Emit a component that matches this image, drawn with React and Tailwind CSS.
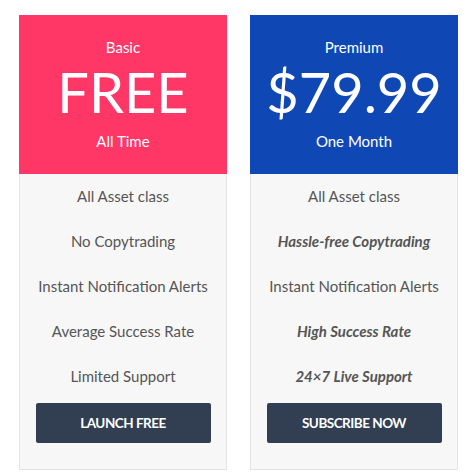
const plans = [
  {
    name: "Basic",
    price: "FREE",
    period: "All Time",
    head: "bg-[#ff3767]",
    cta: "LAUNCH FREE",
    features: [
      { text: "All Asset class" },
      { text: "No Copytrading" },
      { text: "Instant Notification Alerts" },
      { text: "Average Success Rate" },
      { text: "Limited Support" },
    ],
  },
  {
    name: "Premium",
    price: "$79.99",
    period: "One Month",
    head: "bg-[#0f48b5]",
    cta: "SUBSCRIBE NOW",
    features: [
      { text: "All Asset class" },
      { text: "Hassle-free Copytrading", em: true },
      { text: "Instant Notification Alerts" },
      { text: "High Success Rate", em: true },
      { text: "24×7 Live Support", em: true },
    ],
  },
];

const PlanCard = ({ plan }) => (
  <div className="w-[208px] flex flex-col">
    {/* Header */}
    <div className={`${plan.head} h-[159px] flex flex-col items-center text-white`}>
      <p className="mt-[22px] text-[15px] leading-[20px]">{plan.name}</p>
      <p className="mt-[5px] text-[56px] leading-[60px] font-normal">{plan.price}</p>
      <p className="mt-[9px] text-[15px] leading-[20px]">{plan.period}</p>
    </div>

    {/* Features */}
    <div className="bg-[#f7f7f7] border border-t-0 border-[#e4e4e4] flex flex-col items-center pt-[11px] pb-[26px]">
      {plan.features.map((f) => (
        <p
          key={f.text}
          className={`h-[45px] leading-[22px] text-[15px] text-[#555] ${f.em ? "italic font-bold text-[#4a4a4a]" : ""}`}
        >
          {f.text}
        </p>
      ))}
      <button className="mt-[-7px] w-[175px] h-[40px] bg-[#323e52] rounded-[2px] text-white text-[13.5px] font-bold tracking-[-0.5px]">
        {plan.cta}
      </button>
    </div>
  </div>
);

export default function App() {
  return (
    <div
      className="w-[470px] h-[476px] bg-white flex gap-[23px] pl-[19px] pt-[15px]"
      style={{ fontFamily: "Lato, 'Open Sans', sans-serif" }}
    >
      {plans.map((p) => (
        <PlanCard key={p.name} plan={p} />
      ))}
    </div>
  );
}
